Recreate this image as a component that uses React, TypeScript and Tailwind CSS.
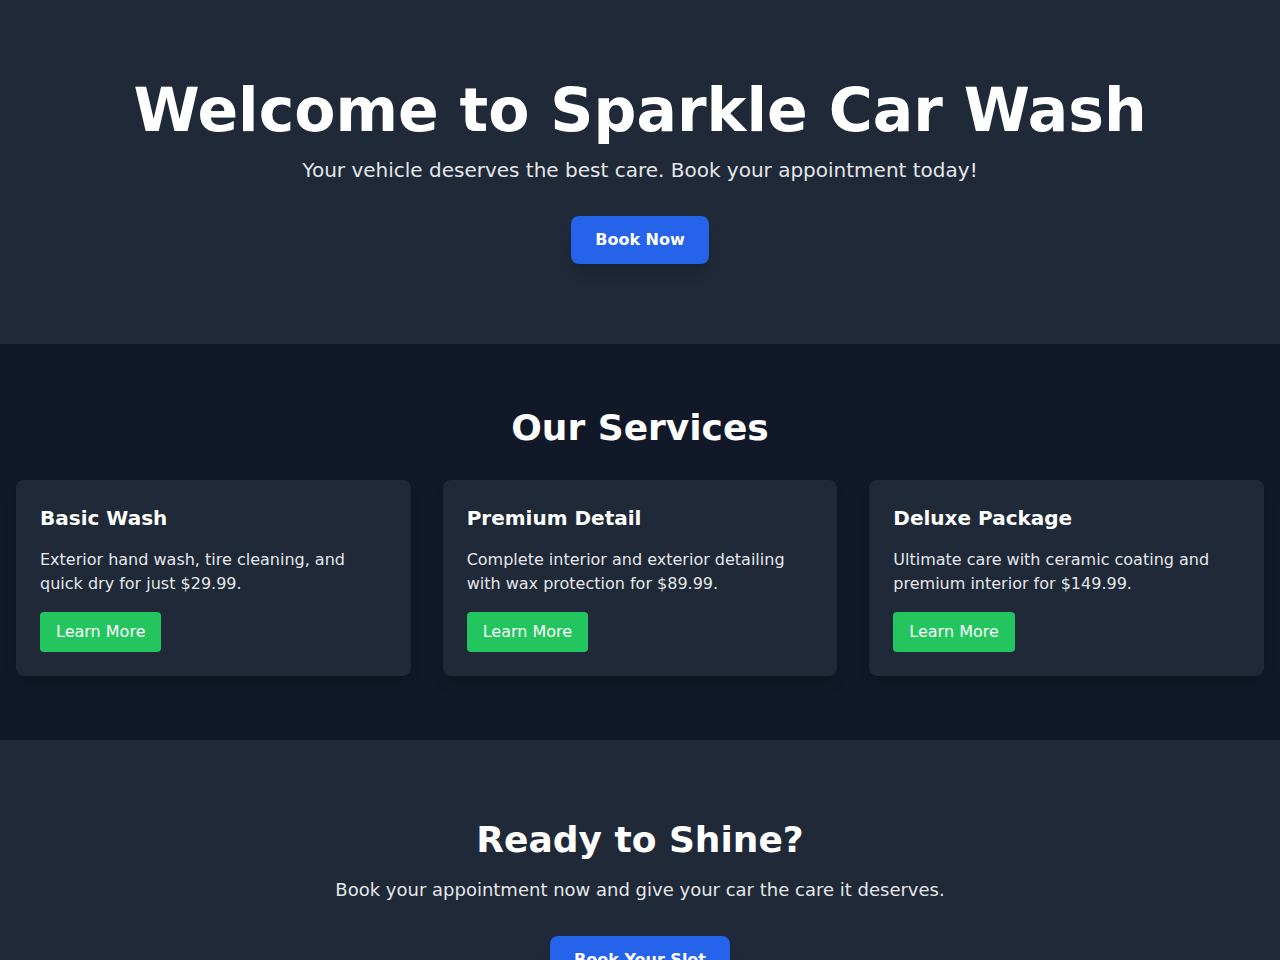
const services = [
  {
    title: 'Basic Wash',
    text: 'Exterior hand wash, tire cleaning, and quick dry for just $29.99.',
  },
  {
    title: 'Premium Detail',
    text: 'Complete interior and exterior detailing with wax protection for $89.99.',
  },
  {
    title: 'Deluxe Package',
    text: 'Ultimate care with ceramic coating and premium interior for $149.99.',
  },
]

function App() {
  return (
    <div className="min-h-screen bg-[#1f2937] text-white font-['DejaVu_Sans',sans-serif]">
      {/* Hero */}
      <section className="bg-[#1f2937] py-20 text-center">
        <h1 className="text-6xl font-bold mb-4">Welcome to Sparkle Car Wash</h1>
        <p className="text-xl text-[#e5e7eb] mb-8">
          Your vehicle deserves the best care. Book your appointment today!
        </p>
        <button className="bg-[#2563eb] text-white font-bold px-6 py-3 rounded-lg shadow-lg">
          Book Now
        </button>
      </section>

      {/* Services */}
      <section className="bg-[#111827] py-16">
        <h2 className="text-4xl font-bold text-center mb-8">Our Services</h2>
        <div className="grid grid-cols-3 gap-8 px-4">
          {services.map((s) => (
            <div key={s.title} className="bg-[#1f2937] rounded-lg shadow-lg p-6">
              <h3 className="text-xl font-bold mb-4">{s.title}</h3>
              <p className="text-[#e5e7eb] mb-4">{s.text}</p>
              <button className="bg-[#22c55e] text-white px-4 py-2 rounded">
                Learn More
              </button>
            </div>
          ))}
        </div>
      </section>

      {/* Call to action */}
      <section className="bg-[#1f2937] py-20 text-center">
        <h2 className="text-4xl font-bold mb-4">Ready to Shine?</h2>
        <p className="text-lg text-[#e5e7eb] mb-8">
          Book your appointment now and give your car the care it deserves.
        </p>
        <button className="bg-[#2563eb] text-white font-bold px-6 py-3 rounded-lg shadow-lg">
          Book Your Slot
        </button>
      </section>
    </div>
  )
}

export default App
